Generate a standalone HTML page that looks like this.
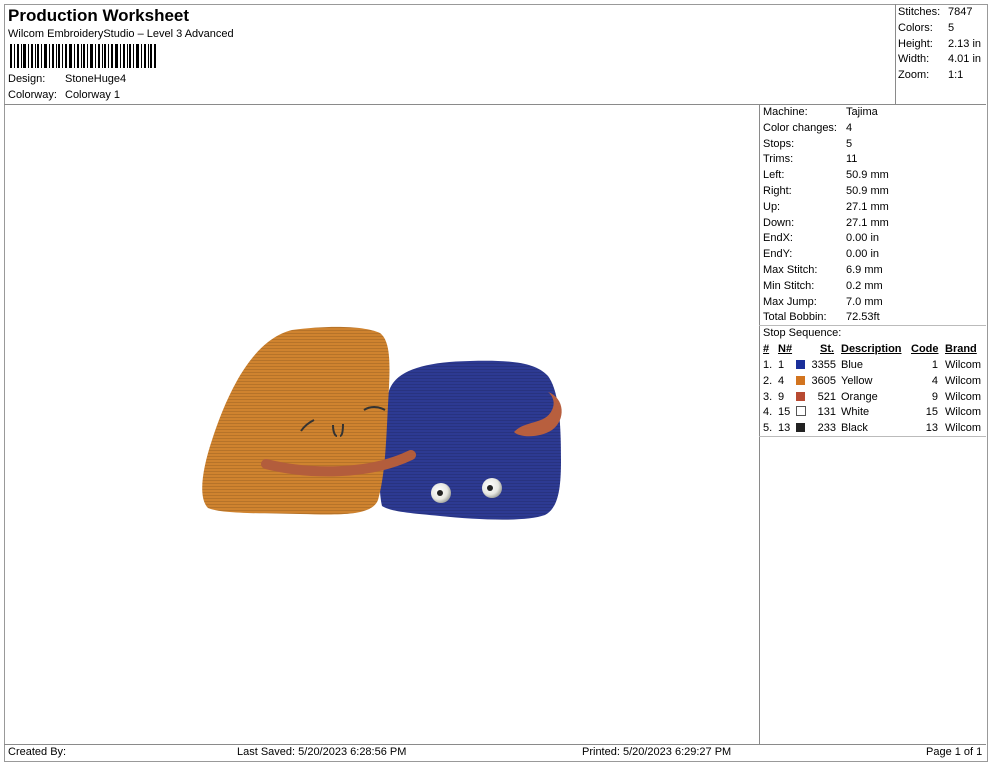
<!DOCTYPE html>
<html><head><style>
body{margin:0;width:990px;height:762px;background:#fff;font-family:"Liberation Sans",Arial,sans-serif;font-size:11px;color:#000;position:relative;overflow:hidden}
.a{position:absolute;white-space:nowrap}
.b{position:absolute;border:1px solid #8a8a8a}
.u{text-decoration:underline;font-weight:bold}
.sw{display:inline-block;width:9px;height:9px;vertical-align:-1px}
</style></head><body>
<div class="b" style="left:4px;top:4px;width:982px;height:756px;border-color:#999"></div>
<div class="b" style="left:4px;top:104px;width:982px;height:0;border-width:1px 0 0 0"></div>
<div class="b" style="left:895px;top:4px;width:0;height:100px;border-width:0 0 0 1px"></div>
<div class="b" style="left:759px;top:104px;width:0;height:640px;border-width:0 0 0 1px"></div>
<div class="b" style="left:4px;top:744px;width:982px;height:0;border-width:1px 0 0 0"></div>
<div class="b" style="left:759px;top:325px;width:227px;height:0;border-width:1px 0 0 0;border-color:#bbb"></div>
<div class="b" style="left:759px;top:436px;width:227px;height:0;border-width:1px 0 0 0;border-color:#bbb"></div>

<div class="a" style="left:8px;top:6px;font-size:17px;font-weight:bold">Production Worksheet</div>
<div class="a" style="left:8px;top:28px">Wilcom EmbroideryStudio – Level 3 Advanced</div>
<svg class="a" style="left:10px;top:44px" width="148" height="24">
<g fill="#000">
<rect x="0" y="0" width="2" height="24"/><rect x="4" y="0" width="1" height="24"/><rect x="7" y="0" width="2" height="24"/><rect x="11" y="0" width="1" height="24"/><rect x="13" y="0" width="3" height="24"/><rect x="18" y="0" width="1" height="24"/><rect x="21" y="0" width="2" height="24"/><rect x="25" y="0" width="1" height="24"/><rect x="27" y="0" width="2" height="24"/><rect x="31" y="0" width="1" height="24"/><rect x="34" y="0" width="3" height="24"/><rect x="39" y="0" width="1" height="24"/><rect x="42" y="0" width="2" height="24"/><rect x="46" y="0" width="1" height="24"/><rect x="48" y="0" width="2" height="24"/><rect x="52" y="0" width="1" height="24"/><rect x="55" y="0" width="2" height="24"/><rect x="59" y="0" width="3" height="24"/><rect x="64" y="0" width="1" height="24"/><rect x="67" y="0" width="2" height="24"/><rect x="71" y="0" width="1" height="24"/><rect x="73" y="0" width="2" height="24"/><rect x="77" y="0" width="1" height="24"/><rect x="80" y="0" width="3" height="24"/><rect x="85" y="0" width="1" height="24"/><rect x="88" y="0" width="2" height="24"/><rect x="92" y="0" width="1" height="24"/><rect x="94" y="0" width="2" height="24"/><rect x="98" y="0" width="1" height="24"/><rect x="101" y="0" width="2" height="24"/><rect x="105" y="0" width="3" height="24"/><rect x="110" y="0" width="1" height="24"/><rect x="113" y="0" width="2" height="24"/><rect x="117" y="0" width="1" height="24"/><rect x="119" y="0" width="2" height="24"/><rect x="123" y="0" width="1" height="24"/><rect x="126" y="0" width="3" height="24"/><rect x="131" y="0" width="1" height="24"/><rect x="134" y="0" width="2" height="24"/><rect x="138" y="0" width="1" height="24"/><rect x="140" y="0" width="2" height="24"/><rect x="144" y="0" width="2" height="24"/>
</g></svg>
<div class="a" style="left:8px;top:73px">Design:</div><div class="a" style="left:65px;top:73px">StoneHuge4</div>
<div class="a" style="left:8px;top:89px">Colorway:</div><div class="a" style="left:65px;top:89px">Colorway 1</div>

<div class="a" style="left:898px;top:5px;line-height:15.8px">Stitches:<br>Colors:<br>Height:<br>Width:<br>Zoom:</div>
<div class="a" style="left:948px;top:5px;line-height:15.8px">7847<br>5<br>2.13 in<br>4.01 in<br>1:1</div>

<div class="a" style="left:763px;top:105px;line-height:15.8px">Machine:<br>Color changes:<br>Stops:<br>Trims:<br>Left:<br>Right:<br>Up:<br>Down:<br>EndX:<br>EndY:<br>Max Stitch:<br>Min Stitch:<br>Max Jump:<br>Total Bobbin:</div>
<div class="a" style="left:846px;top:105px;line-height:15.8px">Tajima<br>4<br>5<br>11<br>50.9 mm<br>50.9 mm<br>27.1 mm<br>27.1 mm<br>0.00 in<br>0.00 in<br>6.9 mm<br>0.2 mm<br>7.0 mm<br>72.53ft</div>
<div class="a" style="left:763px;top:327px">Stop Sequence:</div>
<div class="a u" style="left:763px;top:343px">#</div>
<div class="a u" style="left:778px;top:343px">N#</div>
<div class="a u" style="left:820px;top:343px">St.</div>
<div class="a u" style="left:841px;top:343px">Description</div>
<div class="a u" style="left:911px;top:343px">Code</div>
<div class="a u" style="left:945px;top:343px">Brand</div>
<div class="a" style="left:763px;top:358px;line-height:15.8px">1.<br>2.<br>3.<br>4.<br>5.</div>
<div class="a" style="left:778px;top:358px;line-height:15.8px">1<br>4<br>9<br>15<br>13</div>
<div class="a" style="left:796px;top:358px;line-height:15.8px"><span class="sw" style="background:#1a2f9a"></span><br><span class="sw" style="background:#d2741f"></span><br><span class="sw" style="background:#b84a32"></span><br><span class="sw" style="border:1px solid #555;width:8px;height:8px;background:#fff"></span><br><span class="sw" style="background:#222"></span></div>
<div class="a" style="left:806px;top:358px;line-height:15.8px;width:30px;text-align:right">3355<br>3605<br>521<br>131<br>233</div>
<div class="a" style="left:841px;top:358px;line-height:15.8px">Blue<br>Yellow<br>Orange<br>White<br>Black</div>
<div class="a" style="left:900px;top:358px;line-height:15.8px;width:38px;text-align:right">1<br>4<br>9<br>15<br>13</div>
<div class="a" style="left:945px;top:358px;line-height:15.8px">Wilcom<br>Wilcom<br>Wilcom<br>Wilcom<br>Wilcom</div>

<svg class="a" style="left:0;top:0" width="760" height="740">
<defs><pattern id="st" width="4" height="3" patternUnits="userSpaceOnUse"><rect width="4" height="1" fill="#000" opacity="0.12"/></pattern>
<radialGradient id="ey" cx="0.4" cy="0.4" r="0.6"><stop offset="0" stop-color="#fff"/><stop offset="0.7" stop-color="#e8e8e2"/><stop offset="1" stop-color="#a8aaa4"/></radialGradient></defs>
<g id="bl">
<path d="M388 395 C392 372 420 362 470 361 C510 360 535 362 548 376 C560 392 561 430 561 460 C561 490 558 508 545 515 C525 522 480 520 440 516 C410 513 392 512 382 506 C376 480 382 420 388 395Z" fill="#2d3a92"/>
<path d="M388 395 C392 372 420 362 470 361 C510 360 535 362 548 376 C560 392 561 430 561 460 C561 490 558 508 545 515 C525 522 480 520 440 516 C410 513 392 512 382 506 C376 480 382 420 388 395Z" fill="url(#st)"/>
</g>
<path d="M292 330 C330 325 365 326 380 333 C392 342 390 370 388 405 C386 445 385 475 378 500 C372 516 340 515 300 514 C260 513 222 514 208 508 C198 498 202 470 212 440 C225 400 250 340 292 330Z" fill="#cf832f"/>
<path d="M292 330 C330 325 365 326 380 333 C392 342 390 370 388 405 C386 445 385 475 378 500 C372 516 340 515 300 514 C260 513 222 514 208 508 C198 498 202 470 212 440 C225 400 250 340 292 330Z" fill="url(#st)"/>
<path d="M266 464 C310 475 370 475 411 455" stroke="#b35d3c" stroke-width="10" fill="none" stroke-linecap="round"/>
<path d="M514 432 C525 420 545 425 552 410 C556 402 552 395 548 392 C565 398 566 420 552 430 C540 438 520 438 514 432Z" fill="#b85f3e"/>
<path d="M301 431 C305 425 310 422 314 420" stroke="#333" stroke-width="2" fill="none"/>
<path d="M333 425 C333 432 335 436 337 436 M343 424 C343 432 342 436 340 436" stroke="#333" stroke-width="2" fill="none"/>
<path d="M364 410 C370 406 378 406 385 410" stroke="#333" stroke-width="2" fill="none"/>
<circle cx="441" cy="493" r="10" fill="url(#ey)"/><circle cx="440" cy="493" r="3" fill="#222"/>
<circle cx="492" cy="488" r="10" fill="url(#ey)"/><circle cx="490" cy="488" r="3" fill="#222"/>
</svg>

<div class="a" style="left:8px;top:746px">Created By:</div>
<div class="a" style="left:237px;top:746px">Last Saved: 5/20/2023 6:28:56 PM</div>
<div class="a" style="left:582px;top:746px">Printed: 5/20/2023 6:29:27 PM</div>
<div class="a" style="left:926px;top:746px">Page 1 of 1</div>
</body></html>
